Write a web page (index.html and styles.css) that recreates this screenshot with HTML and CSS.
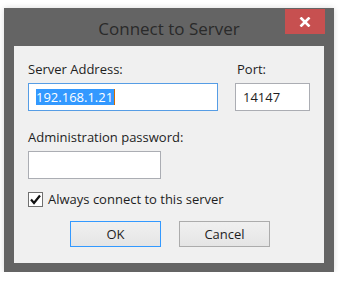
FILE: index.html
```html
<!DOCTYPE html>
<html lang="en">
<head>
  <meta charset="UTF-8">
  <title>Connect to Server</title>
  <link rel="stylesheet" href="styles.css">
</head>
<body>
  <div class="window">
    <div class="titlebar">
      <span></span>
      <div class="title">Connect to Server</div>
      <div class="close">
        <svg width="12" height="10" viewBox="0 0 12 10">
          <path d="M1.5 0.5 L10.5 9.5 M10.5 0.5 L1.5 9.5" stroke="#fff" stroke-width="2.6" fill="none"/>
        </svg>
      </div>
    </div>
    <div class="content">
      <div class="top-row">
        <div class="field address">
          <div class="label">Server Address:</div>
          <div class="input focused"><span class="selected">192.168.1.21</span><span class="caret"></span></div>
        </div>
        <div class="field port">
          <div class="label">Port:</div>
          <div class="input">14147</div>
        </div>
      </div>
      <div class="field password">
        <div class="label">Administration password:</div>
        <div class="input"></div>
      </div>
      <div class="check">
        <span class="box">
          <svg width="13" height="13" viewBox="0 0 13 13">
            <path d="M2 6.5 L5 10 L11 2.5" stroke="#111" stroke-width="2.2" fill="none"/>
          </svg>
        </span>
        <span>Always connect to this server</span>
      </div>
      <div class="buttons">
        <div class="button default">OK</div>
        <div class="button">Cancel</div>
      </div>
    </div>
  </div>
</body>
</html>
```

FILE: styles.css
```css
* {
  margin: 0;
  padding: 0;
  box-sizing: border-box;
}

body {
  background: #ffffff;
  font-family: "Open Sans", "Noto Sans", sans-serif;
  font-size: 13px;
  color: #1e1e1e;
}

.window {
  width: 330px;
  margin: 8px 0 0 4px;
  background: #646464;
  padding: 0 10px 9px;
  box-shadow: 0 0 6px rgba(0, 0, 0, 0.15);
}

.titlebar {
  display: grid;
  grid-template-columns: 1fr auto 1fr;
  height: 38px;
}

.title {
  font-size: 17px;
  color: #2a2a2a;
  line-height: 38px;
  padding-top: 2px;
}

.close {
  justify-self: end;
  align-self: start;
  width: 40px;
  height: 25px;
  margin: 1px -1px 0 0;
  background: #c75050;
  display: flex;
  align-items: center;
  justify-content: center;
}

.content {
  background: #f0f0f0;
  padding: 15px 14px 16px;
}

.top-row {
  display: flex;
  gap: 17px;
}

.label {
  line-height: 17px;
  margin-bottom: 5px;
}

.input {
  height: 28px;
  background: #ffffff;
  border: 1px solid #abadb3;
  font-size: 13px;
  line-height: 26px;
  padding-left: 7px;
  display: flex;
  align-items: center;
}

.address .input {
  width: 190px;
}

.port .label {
  padding-left: 2px;
}

.port .input {
  width: 75px;
}

.focused {
  border-color: #569de5;
}

.selected {
  background: #3399ff;
  color: #ffffff;
  line-height: 16px;
  padding-right: 1px;
}

.caret {
  width: 1px;
  height: 16px;
  background: #d46a00;
}

.password {
  margin-top: 18px;
}

.password .input {
  width: 133px;
}

.check {
  display: flex;
  align-items: center;
  gap: 5px;
  margin-top: 12px;
  line-height: 16px;
}

.box {
  width: 15px;
  height: 15px;
  border: 1px solid #707070;
  background: #ffffff;
  display: flex;
  align-items: center;
  justify-content: center;
}

.buttons {
  display: flex;
  gap: 18px;
  margin-top: 14px;
  padding-left: 42px;
}

.button {
  width: 91px;
  height: 26px;
  border: 1px solid #acacac;
  background: linear-gradient(#f0f0f0, #e5e5e5);
  text-align: center;
  line-height: 24px;
}

.button.default {
  border-color: #3399ff;
}
```
